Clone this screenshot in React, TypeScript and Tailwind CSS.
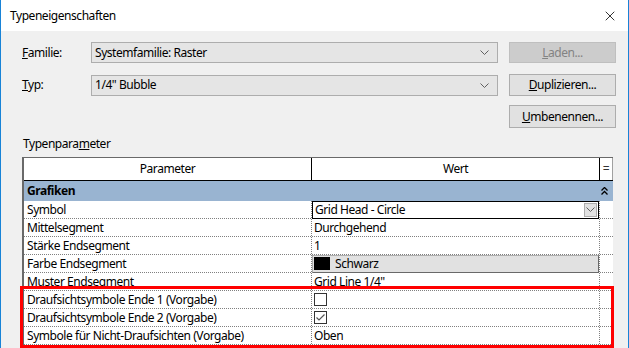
import { X } from "lucide-react";

const Chevron = ({ className = "" }: { className?: string }) => (
  <svg width="9" height="5" viewBox="0 0 9 5" className={className}>
    <polyline points="0.5,0.5 4.5,4.5 8.5,0.5" fill="none" stroke="currentColor" strokeWidth="1" />
  </svg>
);

const Combo = ({ value }: { value: string }) => (
  <div className="flex h-[21px] w-[407px] items-center justify-between border border-[#adadad] bg-[#e5e5e5] pl-[3px] pr-[8px]">
    <span>{value}</span>
    <Chevron className="text-[#606060]" />
  </div>
);

const Btn = ({ children, disabled = false, h = "h-[22px]" }: { children: React.ReactNode; disabled?: boolean; h?: string }) => (
  <div
    className={`flex ${h} w-[107px] items-center justify-center border ${
      disabled ? "border-[#bfbfbf] bg-[#cccccc] text-[#838383]" : "border-[#adadad] bg-[#e1e1e1]"
    }`}
  >
    {children}
  </div>
);

type Row = { label: string; value: React.ReactNode; kind?: "combo" | "button" };

const rows: Row[] = [
  { label: "Symbol", value: "Grid Head - Circle", kind: "combo" },
  { label: "Mittelsegment", value: "Durchgehend" },
  { label: "Stärke Endsegment", value: "1" },
  { label: "Farbe Endsegment", value: "Schwarz", kind: "button" },
  { label: "Muster Endsegment", value: "Grid Line 1/4\"" },
  { label: "Draufsichtsymbole Ende 1 (Vorgabe)", value: <div className="ml-[2px] h-[13px] w-[13px] border border-[#333]" /> },
  {
    label: "Draufsichtsymbole Ende 2 (Vorgabe)",
    value: (
      <div className="ml-[2px] flex h-[13px] w-[13px] items-center justify-center border border-[#333]">
        <svg width="9" height="7" viewBox="0 0 9 7">
          <polyline points="0.5,3.5 3,6 8.5,0.5" fill="none" stroke="#555" strokeWidth="1.2" />
        </svg>
      </div>
    ),
  },
  { label: "Symbole für Nicht-Draufsichten (Vorgabe)", value: "Oben" },
];

export default function App() {
  return (
    <div className="relative h-[348px] w-[629px] overflow-hidden border-x border-[#1883d7] bg-[#f0f0f0] font-['Noto_Sans',sans-serif] text-[12px] leading-none tracking-[-0.45px] text-black">
      {/* title bar */}
      <div className="flex h-[31px] items-center justify-between bg-white pl-[9px] pr-[10px]">
        <span>Typeneigenschaften</span>
        <X size={16} strokeWidth={1.2} />
      </div>

      <div className="flex flex-col pl-[21px] pt-[11px]">
        <div className="flex items-center">
          <span className="w-[69px]">
            <u>F</u>amilie:
          </span>
          <Combo value="Systemfamilie: Raster" />
          <div className="ml-[11px]">
            <Btn disabled h="h-[21px]">
              <u>L</u>aden...
            </Btn>
          </div>
        </div>
        <div className="mt-[11px] flex items-center">
          <span className="w-[69px]">
            <u>T</u>yp:
          </span>
          <Combo value={"1/4\" Bubble"} />
          <div className="ml-[11px]">
            <Btn>
              <u>D</u>uplizieren...
            </Btn>
          </div>
        </div>
        <div className="mt-[9px] flex justify-end pr-[12px]">
          <Btn h="h-[23px]">
            <u>U</u>mbenennen...
          </Btn>
        </div>
        <div className="mt-[10px] pl-[1px]">
          Typenpara<u>m</u>eter
        </div>

        {/* table */}
        <div className="mt-[7px] w-[591px] border-l-2 border-t border-[#696969]">
          <div className="flex h-[23px] border-b border-black bg-white">
            <div className="flex w-[288px] items-center justify-center border-r border-black">Parameter</div>
            <div className="flex w-[288px] items-center justify-center border-r border-black">Wert</div>
            <div className="flex flex-1 items-center justify-center border-r border-[#a0a0a0] text-[#333]">=</div>
          </div>
          <div className="flex h-[20px] items-center justify-between bg-[#99b4d1] pl-[3px] pr-[5px] font-bold">
            <span>Grafiken</span>
            <svg width="7" height="8" viewBox="0 0 7 8">
              <polyline points="0.5,3.5 3.5,0.5 6.5,3.5" fill="none" stroke="#000" strokeWidth="1.3" />
              <polyline points="0.5,7.5 3.5,4.5 6.5,7.5" fill="none" stroke="#000" strokeWidth="1.3" />
            </svg>
          </div>
          {rows.map((r) => (
            <div key={r.label} className="flex h-[18px] border-b border-dotted border-[#808080] bg-white">
              <div className="flex w-[288px] items-center border-r border-dotted border-[#808080] pl-[3px]">{r.label}</div>
              <div className="flex w-[288px] items-center border-r border-dotted border-[#808080]">
                {r.kind === "combo" ? (
                  <div className="flex h-[18px] w-full items-center justify-between border border-black pl-[2px]">
                    <span>{r.value}</span>
                    <div className="mr-[1px] flex h-[14px] w-[13px] items-center justify-center border border-[#adadad] bg-[#e1e1e1]">
                      <Chevron className="text-[#606060]" />
                    </div>
                  </div>
                ) : r.kind === "button" ? (
                  <div className="flex h-[18px] w-full items-center gap-[5px] border border-[#adadad] border-b-[#696969] border-r-[#696969] bg-[#e1e1e1] pl-[1px]">
                    <div className="h-[13px] w-[16px] bg-black" />
                    <span>{r.value}</span>
                  </div>
                ) : typeof r.value === "string" ? (
                  <span className="pl-[2px]">{r.value}</span>
                ) : (
                  r.value
                )}
              </div>
              <div className="flex-1" />
            </div>
          ))}
        </div>
      </div>

      {/* annotation highlight */}
      <div className="absolute left-[19px] top-[286px] h-[62px] w-[594px] border-[3px] border-[#ff0000]" />
    </div>
  );
}
